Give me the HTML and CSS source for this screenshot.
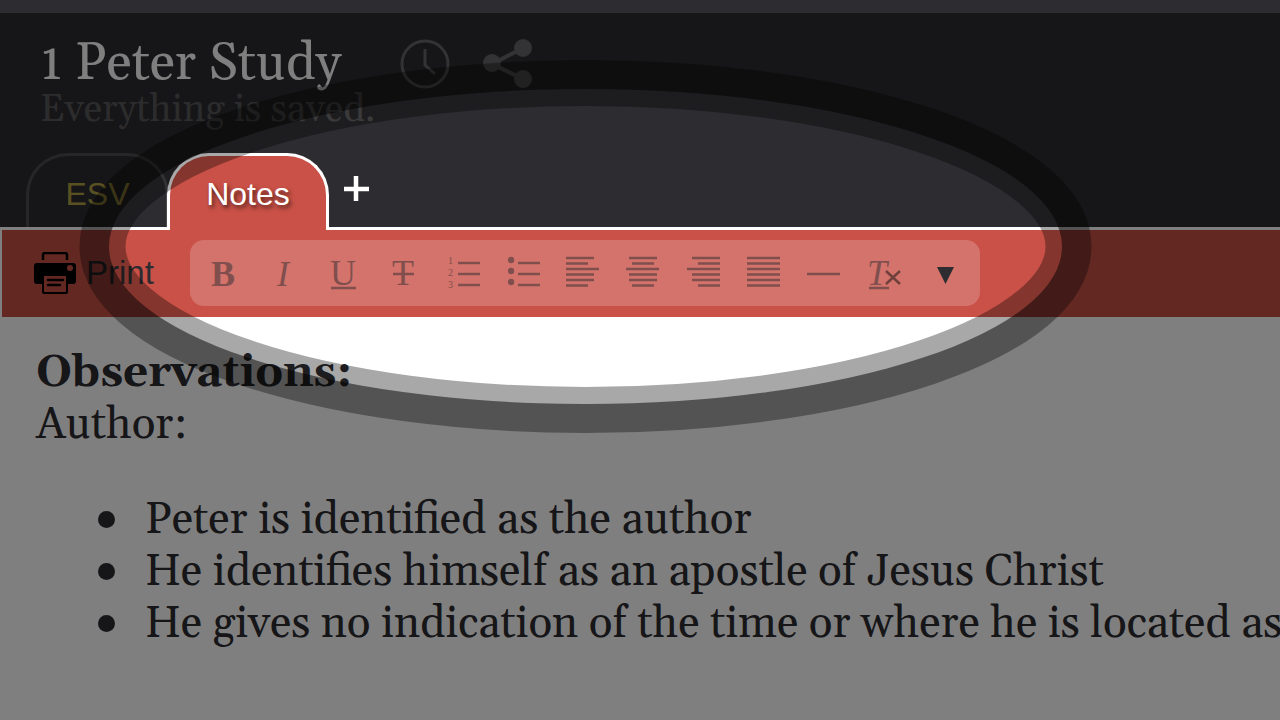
FILE: index.html
```
<!DOCTYPE html>
<html lang="en">
<head>
<meta charset="utf-8">
<title>1 Peter Study</title>
<link rel="stylesheet" href="styles.css">
</head>
<body>
<div class="app">
  <header class="header">
    <div class="title-row">
      <h1 class="title">1 Peter Study</h1>
      <button class="icon-button" aria-label="History">
        <svg width="50" height="50" viewBox="0 0 50 50" fill="none" stroke="currentColor" stroke-width="3"><circle cx="25" cy="25" r="23"/><path d="M25 10V26L35 35"/></svg>
      </button>
      <button class="icon-button share" aria-label="Share">
        <svg width="50" height="50" viewBox="0 0 50 50" fill="currentColor"><path d="M41 9L10 25L41 40" fill="none" stroke="currentColor" stroke-width="4"/><circle cx="10" cy="24" r="9"/><circle cx="41" cy="9" r="9"/><circle cx="41" cy="40" r="9"/></svg>
      </button>
    </div>
    <p class="status">Everything is saved.</p>
    <nav class="tabs">
      <button class="tab">ESV</button>
      <button class="tab active">Notes</button>
      <button class="add" aria-label="Add tab"><svg width="26" height="26" viewBox="0 0 26 26" stroke="#fff" stroke-width="4.500"><path d="M1 13H26M13 0V25"/></svg></button>
    </nav>
  </header>
  <div class="toolbar">
    <button class="print">
      <svg width="42" height="42" viewBox="0 0 42 42"><path d="M9 8V3Q9 1 11 1H31Q33 1 33 3V8" fill="none" stroke="#000" stroke-width="2.500"/><rect y="11" width="42" height="21" rx="3"/><rect class="paper" x="9" y="23" width="24" height="18" rx="1" stroke="#000" stroke-width="2"/><path d="M14 28H29M14 33H26" stroke="#000" stroke-width="2.500" stroke-linecap="round"/><circle class="paper" cx="36" cy="16" r="3"/></svg>
      <span>Print</span>
    </button>
    <div class="format" role="toolbar" aria-label="Formatting">
      <button class="bold">B</button>
      <button class="italic">I</button>
      <button aria-label="Underline"><svg width="34" height="34" viewBox="0 0 34 34"><text x="17" y="28" text-anchor="middle">U</text><path d="M5 31H30"/></svg></button>
      <button aria-label="Strikethrough"><svg width="34" height="34" viewBox="0 0 34 34"><text x="17" y="28" text-anchor="middle">T</text><path d="M7 17H28"/></svg></button>
      <button aria-label="Numbered list"><svg width="34" height="34" viewBox="0 0 34 34"><path d="M12 6H34M12 17H34M12 28H34"/><text class="digit" x="2" y="7">1</text><text class="digit" x="2" y="19">2</text><text class="digit" x="2" y="31">3</text></svg></button>
      <button aria-label="Bulleted list"><svg width="34" height="34" viewBox="0 0 34 34"><path d="M12 6H34M12 17H34M12 28H34"/><g class="dots"><circle cx="5" cy="3" r="3.200"/><circle cx="5" cy="14" r="3.200"/><circle cx="5" cy="25" r="3.200"/></g></svg></button>
      <button aria-label="Align left"><svg width="34" height="34" viewBox="0 0 34 34"><path d="M0 1H28M0 6.500H22M0 12H33M0 17.500H28M0 23H28M0 28.500H22"/></svg></button>
      <button aria-label="Align center"><svg width="34" height="34" viewBox="0 0 34 34"><path d="M3 1H31M6 6.500H28M0 12H33M3 17.500H31M3 23H31M6 28.500H28"/></svg></button>
      <button aria-label="Align right"><svg width="34" height="34" viewBox="0 0 34 34"><path d="M6 1H34M12 6.500H34M1 12H34M6 17.500H34M6 23H34M12 28.500H34"/></svg></button>
      <button aria-label="Justify"><svg width="34" height="34" viewBox="0 0 34 34"><path d="M1 1H34M1 6.500H34M1 12H34M1 17.500H34M1 23H34M1 28.500H34"/></svg></button>
      <button aria-label="Horizontal rule"><svg width="34" height="34" viewBox="0 0 34 34"><path d="M1 17H34"/></svg></button>
      <button aria-label="Clear formatting"><svg width="34" height="34" viewBox="0 0 34 34"><text class="slanted" x="1" y="28">T</text><path d="M3 31H23"/><path class="cross" d="M20 14L34 27M34 14L20 27"/></svg></button>
      <button aria-label="More"><svg width="34" height="34" viewBox="0 0 34 34"><path class="arrow" d="M11 10H28L19.500 27Z"/></svg></button>
    </div>
  </div>
  <main class="document">
    <p><strong>Observations:</strong></p>
    <p>Author:</p>
    <ul>
      <li>Peter is identified as the author</li>
      <li>He identifies himself as an apostle of Jesus Christ</li>
      <li>He gives no indication of the time or where he is located as</li>
    </ul>
  </main>
  <svg class="spotlight" aria-hidden="true">
    <defs><mask id="hole"><rect width="100%" height="100%" fill="#fff"/><ellipse cx="585.500" cy="233.500" rx="476.500" ry="157.500" fill="#000"/></mask></defs>
    <rect width="100%" height="100%" fill="#000" fill-opacity=".5" mask="url(#hole)"/>
    <ellipse cx="585.500" cy="233.500" rx="483" ry="163.500" fill="none" stroke="#000" stroke-opacity=".34" stroke-width="46"/>
  </svg>
</div>
</body>
</html>
```
FILE: styles.css
```
* { box-sizing: border-box; }
body {
  margin: 0;
  overflow: hidden;
  font-family: Georgia, Gelasio, "Liberation Serif", serif;
  color: #2d2c31;
  background: #fff;
}
button {
  padding: 0;
  border: 0;
  background: none;
  color: inherit;
  font: inherit;
}
svg { display: block; }
h1, p, ul { margin: 0; }
.app {
  position: relative;
  min-height: 100vh;
  overflow: hidden;
}
.header {
  padding-top: 34px;
  background: #2d2c31;
}
.title-row {
  display: flex;
  align-items: center;
  height: 60px;
  padding-left: 40px;
}
.title {
  width: 360px;
  font-size: 52px;
  font-weight: 400;
  line-height: 60px;
  white-space: nowrap;
  color: #fff;
}
.icon-button { color: #66666a; }
.share { margin-left: 32px; }
.status {
  padding-left: 40px;
  font-size: 38px;
  line-height: 32px;
  color: #58585a;
}
.tabs {
  display: flex;
  height: 101px;
  padding: 27px 0 0 26px;
}
.tab {
  width: 143px;
  padding-top: 6px;
  border: 3px solid #4c4c4e;
  border-bottom: 0;
  border-radius: 42px 42px 0 0;
  font-family: "Liberation Sans", sans-serif;
  font-size: 32px;
  color: #b5a245;
}
.tab.active {
  z-index: 1;
  width: 162px;
  margin: 0 0 -3px -2px;
  padding-top: 2px;
  border-color: #fff;
  background: #c95147;
  color: #fff;
  text-shadow: 2px 3px 4px rgba(0, 0, 0, .6);
}
.add {
  align-self: flex-start;
  padding: 23px 14px;
}
.toolbar {
  display: flex;
  align-items: center;
  height: 91px;
  padding: 0 0 2px 32px;
  border: 2px solid #fff;
  border-width: 3px 0 1px 2px;
  background: #c95147;
}
.print {
  display: flex;
  align-items: center;
  gap: 10px;
  width: 156px;
  font-family: "Liberation Sans", sans-serif;
  font-size: 33px;
}
.paper { fill: #c95147; }
.format {
  display: flex;
  align-items: center;
  height: 66px;
  padding: 0 7px 0 3px;
  border-radius: 14px;
  background: #d4736b;
}
.format button {
  display: flex;
  align-items: center;
  justify-content: center;
  width: 60px;
  height: 66px;
  padding-top: 2px;
  font-family: "Liberation Serif", serif;
  font-size: 36px;
  color: #804f4d;
}
.format svg {
  overflow: visible;
  fill: none;
  stroke: #804f4d;
  stroke-width: 2.5px;
}
.format text {
  fill: #804f4d;
  stroke: none;
}
.format .bold { font-weight: 700; }
.format .italic, .format .slanted { font-style: italic; }
.format .digit { font-size: 10px; }
.format .dots { fill: #804f4d; stroke: none; }
.format .cross { stroke: #70403c; }
.format .arrow { fill: #2d2c31; stroke: none; }
.document {
  padding: 29px 0 0 36px;
  font-size: 44px;
  line-height: 52px;
  white-space: nowrap;
}
.document ul {
  padding: 43px 0 0 62px;
  list-style: none;
}
.document li {
  display: flex;
  align-items: center;
  gap: 30px;
}
.document li::before {
  content: "";
  flex: none;
  width: 17px;
  height: 17px;
  margin-bottom: 2px;
  border-radius: 50%;
  background: #2d2c31;
}
.spotlight {
  position: absolute;
  top: 13px;
  left: 0;
  width: 100%;
  height: calc(100% - 13px);
  pointer-events: none;
  z-index: 2;
}
```
